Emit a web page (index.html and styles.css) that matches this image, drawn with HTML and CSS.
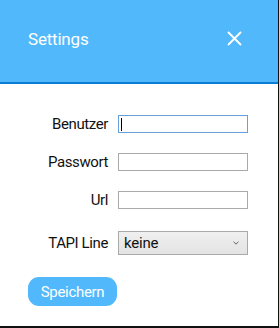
FILE: index.html
```html
<!DOCTYPE html>
<html>
<head>
<meta charset="utf-8">
<link rel="stylesheet" href="styles.css">
</head>
<body>
<div class="dialog">
  <header class="header">
    <span class="title">Settings</span>
    <svg class="close" width="15" height="15" viewBox="0 0 15 15"><path d="M1 1 L14 14 M14 1 L1 14" stroke="#fff" stroke-width="1.8" fill="none"/></svg>
  </header>
  <form class="form">
    <label class="label" for="u">Benutzer</label>
    <div class="field"><input id="u" class="input focused" type="text"><span class="caret"></span></div>
    <label class="label" for="p">Passwort</label>
    <div class="field"><input id="p" class="input" type="password"></div>
    <label class="label" for="url">Url</label>
    <div class="field"><input id="url" class="input" type="text"></div>
    <label class="label sel-label" for="t">TAPI Line</label>
    <div class="field sel-field">
      <div class="select" id="t"><span>keine</span>
        <svg class="chev" width="6" height="4" viewBox="0 0 6 4"><path d="M0.5 0.6 L3 3.2 L5.5 0.6" stroke="#666" stroke-width="1" fill="none"/></svg>
      </div>
    </div>
  </form>
  <div class="actions"><button class="save" type="button">Speichern</button></div>
</div>
</body>
</html>
```
FILE: styles.css
```css
html, body { margin: 0; padding: 0; background: #fff; }
body { font-family: Roboto, "Noto Sans", sans-serif; }
.dialog {
  width: 278px;
  height: 326px;
  border-right: 1px solid #111;
  border-bottom: 2px solid #111;
  background: #fff;
  overflow: hidden;
}
.header {
  height: 84px;
  background: #52b8fc;
  border-bottom: 2px solid #0b7dd3;
  display: flex;
  align-items: center;
  justify-content: space-between;
  padding: 0 36px 5px 28px;
  box-sizing: border-box;
}
.title { color: #fff; font-size: 17px; letter-spacing: -0.2px; }
.close { display: block; }
.form {
  display: grid;
  grid-template-columns: 80px 130px;
  column-gap: 10px;
  row-gap: 20px;
  margin: 31px 0 0 28px;
  align-items: center;
}
.label { text-align: right; font-size: 15px; color: #111; letter-spacing: -0.4px; }
.field { position: relative; height: 18px; }
.input {
  display: block;
  box-sizing: border-box;
  width: 130px;
  height: 18px;
  border: 1px solid #a9a9a9;
  padding: 0;
  margin: 0;
  outline: none;
  background: #fff;
}
.input.focused { border-color: #6a9fd8; }
.caret {
  position: absolute;
  left: 3px;
  top: 3px;
  width: 1px;
  height: 13px;
  background: #000;
}
.sel-field { height: 24px; margin-top: 2px; }
.sel-label { margin-top: 2px; }
.select {
  box-sizing: border-box;
  width: 130px;
  height: 24px;
  border: 1px solid #a9a9a9;
  background: linear-gradient(#f0f0f0, #e3e3e3);
  display: flex;
  align-items: center;
  justify-content: space-between;
  padding: 0 8px 0 5px;
  font-size: 15px;
  color: #111;
  letter-spacing: -0.2px;
}
.actions { margin: 22px 0 0 28px; }
.save {
  width: 89px;
  height: 29px;
  border: none;
  border-radius: 11px;
  background: #52b8fc;
  color: #fff;
  font-family: Roboto, "Noto Sans", sans-serif;
  font-size: 15px;
  letter-spacing: -0.3px;
  padding: 0;
}
```
